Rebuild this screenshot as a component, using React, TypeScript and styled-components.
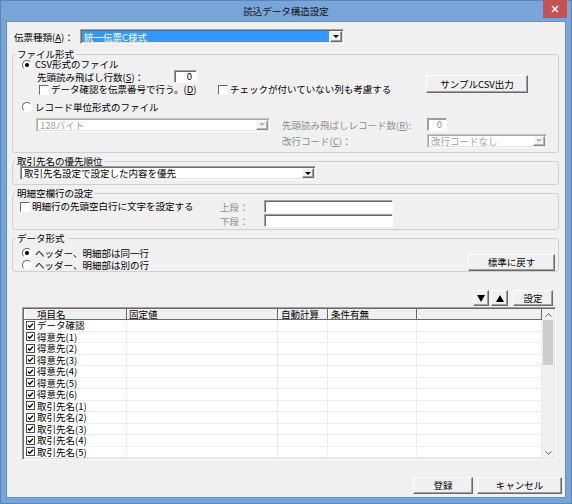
import React from 'react'
import styled, { createGlobalStyle } from 'styled-components'

const GlobalStyle = createGlobalStyle`
  * { box-sizing: border-box; }
  html, body { margin: 0; padding: 0; }
  body {
    font-family: "Noto Sans CJK JP", "Noto Sans", sans-serif;
    font-size: 9.5px;
    color: #000;
    background: #fff;
  }
`

const rows = [
  'データ確認',
  '得意先(1)',
  '得意先(2)',
  '得意先(3)',
  '得意先(4)',
  '得意先(5)',
  '得意先(6)',
  '取引先名(1)',
  '取引先名(2)',
  '取引先名(3)',
  '取引先名(4)',
  '取引先名(5)',
]

const columns = [
  { label: '項目名', indent: 13 },
  { label: '固定値', indent: 2 },
  { label: '自動計算', indent: 3 },
  { label: '条件有無', indent: 3 },
  { label: '', indent: 0 },
]

const App = () => {
  return (
    <>
      <GlobalStyle />
      <Window>
        <TitleBar>
          <Title>読込データ構造設定</Title>
          <CloseButton>
            <svg width="8" height="8" viewBox="0 0 8 8">
              <path d="M1 1 L7 7 M7 1 L1 7" stroke="#fff" strokeWidth="1.6" />
            </svg>
          </CloseButton>
        </TitleBar>

        <Client>
          <TopRow>
            <FieldLabel $w={66}>伝票種類(<u>A</u>)：</FieldLabel>
            <Combo $w={264} $h={15}>
              <ComboText $selected>統一伝票C様式</ComboText>
              <DropButton><Arrow /></DropButton>
            </Combo>
          </TopRow>

          <Group $mt={5} $pb={4}>
            <Legend>ファイル形式</Legend>
            <OptionRow $indent={9} $h={11}>
              <Radio $checked />
              <span>CSV形式のファイル</span>
            </OptionRow>
            <CsvBlock>
              <CsvOptions>
                <OptionRow $indent={24} $h={13}>
                  <FieldLabel $w={137}>先頭読み飛ばし行数(<u>S</u>)：</FieldLabel>
                  <TextBox $w={23} $h={13}>0</TextBox>
                </OptionRow>
                <OptionRow $indent={26} $h={13}>
                  <CheckItem $w={179}>
                    <CheckBox />
                    <span>データ確認を伝票番号で行う。(<u>D</u>)</span>
                  </CheckItem>
                  <CheckItem>
                    <CheckBox />
                    <span>チェックが付いていない列も考慮する</span>
                  </CheckItem>
                </OptionRow>
              </CsvOptions>
              <PushButton $w={102} $h={18} $mt={5}>サンプルCSV出力</PushButton>
            </CsvBlock>
            <OptionRow $indent={9} $h={12} $mt={5}>
              <Radio />
              <span>レコード単位形式のファイル</span>
            </OptionRow>
            <RecordGrid>
              <Combo $w={234} $h={14} $disabled>
                <ComboText $disabled>128バイト</ComboText>
                <DropButton $disabled><Arrow $disabled /></DropButton>
              </Combo>
              <FieldLabel $disabled>先頭読み飛ばしレコード数(<u>R</u>):</FieldLabel>
              <TextBox $w={20} $h={13} $disabled>0</TextBox>
              <span />
              <FieldLabel $disabled>改行コード(<u>C</u>)：</FieldLabel>
              <Combo $w={120} $h={14} $disabled>
                <ComboText $disabled>改行コードなし</ComboText>
                <DropButton $disabled><Arrow $disabled /></DropButton>
              </Combo>
            </RecordGrid>
          </Group>

          <Group $mt={3} $pb={4}>
            <Legend>取引先名の優先順位</Legend>
            <OptionRow $indent={7} $h={14}>
              <Combo $w={296} $h={14}>
                <ComboText>取引先名設定で設定した内容を優先</ComboText>
                <DropButton><Arrow /></DropButton>
              </Combo>
            </OptionRow>
          </Group>

          <Group $mt={3} $pb={2} $pt={2}>
            <Legend>明細空欄行の設定</Legend>
            <BlankRow>
              <CheckItem $w={200}>
                <CheckBox />
                <span>明細行の先頭空白行に文字を設定する</span>
              </CheckItem>
              <BlankGrid>
                <FieldLabel $disabled>上段：</FieldLabel>
                <TextBox $w={129} $h={13} />
                <FieldLabel $disabled>下段：</FieldLabel>
                <TextBox $w={129} $h={13} />
              </BlankGrid>
            </BlankRow>
          </Group>

          <Group $mt={3} $pb={0}>
            <Legend>データ形式</Legend>
            <FormatRow>
              <FormatOptions>
                <OptionRow $indent={9} $h={12}>
                  <Radio $checked />
                  <span>ヘッダー、明細部は同一行</span>
                </OptionRow>
                <OptionRow $indent={9} $h={12}>
                  <Radio />
                  <span>ヘッダー、明細部は別の行</span>
                </OptionRow>
              </FormatOptions>
              <PushButton $w={87} $h={17} $mr={3}>標準に戻す</PushButton>
            </FormatRow>
          </Group>

          <ToolRow>
            <PushButton $w={16} $h={16}>
              <svg width="8" height="7" viewBox="0 0 8 7"><path d="M0 0 H8 L4 7 Z" fill="#000" /></svg>
            </PushButton>
            <PushButton $w={17} $h={16} $ml={2}>
              <svg width="8" height="7" viewBox="0 0 8 7"><path d="M0 7 H8 L4 0 Z" fill="#000" /></svg>
            </PushButton>
            <PushButton $w={40} $h={16} $ml={5}>設定</PushButton>
          </ToolRow>

          <Table>
            <GridArea>
              <HeaderRow>
                {columns.map((c, i) => (
                  <HeaderCell key={i} $indent={c.indent}>{c.label}</HeaderCell>
                ))}
              </HeaderRow>
              {rows.map((r) => (
                <BodyRow key={r}>
                  <BodyCell>
                    <svg width="9" height="9" viewBox="0 0 9 9">
                      <rect x="0.5" y="0.5" width="8" height="8" fill="#fff" stroke="#4a4a4a" />
                      <path d="M2 4.4 L3.8 6.2 L7 2.6" stroke="#000" strokeWidth="1.4" fill="none" />
                    </svg>
                    <span>{r}</span>
                  </BodyCell>
                  <BodyCell />
                  <BodyCell />
                  <BodyCell />
                  <BodyCell />
                </BodyRow>
              ))}
            </GridArea>
            <ScrollBar>
              <ScrollArrow>
                <svg width="7" height="4" viewBox="0 0 7 4"><path d="M0.5 3.5 L3.5 0.8 L6.5 3.5" stroke="#606060" fill="none" /></svg>
              </ScrollArrow>
              <Thumb />
              <ScrollTrack />
              <ScrollArrow>
                <svg width="7" height="4" viewBox="0 0 7 4"><path d="M0.5 0.5 L3.5 3.2 L6.5 0.5" stroke="#606060" fill="none" /></svg>
              </ScrollArrow>
            </ScrollBar>
          </Table>

          <Footer>
            <PushButton $w={60} $h={17}>登録</PushButton>
            <PushButton $w={85} $h={17}>キャンセル</PushButton>
          </Footer>
        </Client>
      </Window>
    </>
  )
}

const Window = styled.div`
  width: 572px;
  height: 504px;
  background: #78a5d8;
  box-shadow: inset 0 0 0 1px #5a86bb;
  display: flex;
  flex-direction: column;
`

const TitleBar = styled.div`
  height: 22px;
  flex: none;
  display: grid;
  grid-template-columns: 1fr auto 1fr;
  align-items: start;
`

const Title = styled.div`
  grid-column: 2;
  line-height: 22px;
  font-size: 9.5px;
  color: #111;
`

const CloseButton = styled.div`
  grid-column: 3;
  justify-self: end;
  width: 24px;
  height: 18px;
  margin-right: 5px;
  background: #c75050;
  display: flex;
  align-items: center;
  justify-content: center;
`

const Client = styled.div`
  flex: 1;
  margin: 0 7px 7px;
  background: #f0f0f0;
  box-shadow: 0 0 0 1px #6690c2;
  display: flex;
  flex-direction: column;
`

const TopRow = styled.div`
  display: flex;
  align-items: center;
  height: 15px;
  margin: 7px 0 0 7px;
`

const FieldLabel = styled.span<{ $w?: number; $disabled?: boolean }>`
  width: ${(p) => (p.$w ? `${p.$w}px` : 'auto')};
  flex: none;
  color: ${(p) => (p.$disabled ? '#8e8e8e' : '#000')};
  white-space: nowrap;
  line-height: 12px;
  align-self: center;
`

const Combo = styled.div<{ $w: number; $h: number; $disabled?: boolean }>`
  width: ${(p) => p.$w}px;
  height: ${(p) => p.$h}px;
  flex: none;
  display: flex;
  background: #fff;
  border: 1px solid;
  border-color: ${(p) => (p.$disabled ? '#c4c4c4 #fff #fff #c4c4c4' : '#a0a0a0 #fff #fff #a0a0a0')};
  box-shadow: inset 1px 1px 0 ${(p) => (p.$disabled ? '#a8a8a8' : '#696969')}, inset -1px -1px 0 #e3e3e3;
  padding: 1px;
`

const ComboText = styled.div<{ $selected?: boolean; $disabled?: boolean }>`
  flex: 1;
  padding-left: 2px;
  margin-right: 1px;
  line-height: 10px;
  display: flex;
  align-items: center;
  white-space: nowrap;
  background: ${(p) => (p.$selected ? '#3399ff' : 'transparent')};
  color: ${(p) => (p.$selected ? '#fff' : p.$disabled ? '#a0a0a0' : '#000')};
`

const DropButton = styled.div<{ $disabled?: boolean }>`
  width: 12px;
  flex: none;
  display: flex;
  align-items: center;
  justify-content: center;
  background: #f0f0f0;
  border: 1px solid;
  border-color: #fff #696969 #696969 #fff;
  box-shadow: inset -1px -1px 0 #a0a0a0;
  opacity: ${(p) => (p.$disabled ? 0.75 : 1)};
`

const Arrow = styled.span<{ $disabled?: boolean }>`
  width: 0;
  height: 0;
  border-left: 3px solid transparent;
  border-right: 3px solid transparent;
  border-top: 3px solid ${(p) => (p.$disabled ? '#a0a0a0' : '#000')};
`

const Group = styled.fieldset<{ $mt: number; $pb: number; $pt?: number }>`
  margin: ${(p) => p.$mt}px 6px 0 5px;
  padding: ${(p) => p.$pt ?? 0}px 0 ${(p) => p.$pb}px 0;
  border: 1px solid #d0d0d0;
  border-radius: 3px;
  min-width: 0;
`

const Legend = styled.legend`
  margin-left: 2px;
  padding: 0 2px;
  line-height: 10px;
  font-size: 9.5px;
`

const OptionRow = styled.div<{ $indent: number; $h: number; $mt?: number }>`
  display: flex;
  align-items: center;
  height: ${(p) => p.$h}px;
  margin-top: ${(p) => p.$mt ?? 0}px;
  padding-left: ${(p) => p.$indent}px;
  white-space: nowrap;
  line-height: 11px;
`

const Radio = styled.span<{ $checked?: boolean }>`
  width: 10px;
  height: 10px;
  flex: none;
  margin-right: 3px;
  border-radius: 50%;
  background: #fff;
  border: 1px solid;
  border-color: #6a6a6a #fff #fff #6a6a6a;
  display: flex;
  align-items: center;
  justify-content: center;
  &::after {
    content: '';
    width: 4px;
    height: 4px;
    border-radius: 50%;
    background: ${(p) => (p.$checked ? '#000' : 'transparent')};
  }
`

const CheckItem = styled.div<{ $w?: number }>`
  display: flex;
  align-items: center;
  width: ${(p) => (p.$w ? `${p.$w}px` : 'auto')};
  flex: none;
  white-space: nowrap;
  height: 13px;
  line-height: 11px;
`

const CheckBox = styled.span`
  width: 10px;
  height: 10px;
  flex: none;
  margin-right: 2px;
  background: #fff;
  border: 1px solid;
  border-color: #6a6a6a #fff #fff #6a6a6a;
`

const TextBox = styled.div<{ $w: number; $h: number; $disabled?: boolean }>`
  width: ${(p) => p.$w}px;
  height: ${(p) => p.$h}px;
  flex: none;
  background: #fff;
  border: 1px solid;
  border-color: #a0a0a0 #fff #fff #a0a0a0;
  box-shadow: inset 1px 1px 0 ${(p) => (p.$disabled ? '#9a9a9a' : '#696969')};
  text-align: right;
  padding-right: 4px;
  line-height: 11px;
  color: ${(p) => (p.$disabled ? '#8e8e8e' : '#000')};
`

const PushButton = styled.div<{ $w: number; $h: number; $mt?: number; $ml?: number; $mr?: number }>`
  width: ${(p) => p.$w}px;
  height: ${(p) => p.$h}px;
  margin: ${(p) => p.$mt ?? 0}px ${(p) => p.$mr ?? 0}px 0 ${(p) => p.$ml ?? 0}px;
  flex: none;
  display: flex;
  align-items: center;
  justify-content: center;
  white-space: nowrap;
  line-height: 11px;
  background: #f0f0f0;
  border: 1px solid;
  border-color: #fff #696969 #696969 #fff;
  box-shadow: inset -1px -1px 0 #a0a0a0;
`

const CsvBlock = styled.div`
  display: flex;
  align-items: flex-start;
`

const CsvOptions = styled.div`
  width: 413px;
  flex: none;
`

const RecordGrid = styled.div`
  display: grid;
  grid-template-columns: 246px 145px auto;
  grid-auto-rows: 15px;
  row-gap: 1px;
  align-items: center;
  margin-top: 4px;
  padding-left: 23px;
`

const BlankRow = styled.div`
  display: flex;
  align-items: flex-start;
  padding-left: 7px;
`

const BlankGrid = styled.div`
  display: grid;
  grid-template-columns: 44px 129px;
  grid-auto-rows: 13px;
  row-gap: 1px;
`

const FormatRow = styled.div`
  display: flex;
  justify-content: space-between;
  align-items: flex-end;
`

const FormatOptions = styled.div`
  padding-top: 4px;
`

const ToolRow = styled.div`
  display: flex;
  justify-content: flex-end;
  margin: 18px 12px 0 0;
`

const Table = styled.div`
  margin: 1px 9px 0 15px;
  height: 153px;
  flex: none;
  display: flex;
  background: #fff;
  border: 1px solid;
  border-color: #a0a0a0 #fff #fff #a0a0a0;
  box-shadow: inset 1px 1px 0 #696969, inset -1px -1px 0 #e3e3e3;
  padding: 1px;
`

const GridArea = styled.div`
  flex: 1;
  display: flex;
  flex-direction: column;
`

const HeaderRow = styled.div`
  display: grid;
  grid-template-columns: 103px 151px 50px 89px 1fr;
  height: 11px;
  background: #f0f0f0;
  flex: none;
`

const HeaderCell = styled.div<{ $indent: number }>`
  padding-left: ${(p) => p.$indent}px;
  line-height: 10px;
  white-space: nowrap;
  border-right: 1px solid #696969;
  border-bottom: 1px solid #696969;
  box-shadow: inset 1px 0 0 #fff;
`

const BodyRow = styled.div`
  display: grid;
  grid-template-columns: 103px 151px 50px 89px 1fr;
  height: 11.5px;
  flex: none;
`

const BodyCell = styled.div`
  display: flex;
  align-items: center;
  gap: 2px;
  padding-left: 2px;
  border-right: 1px solid #ececec;
  border-bottom: 1px solid #ececec;
  white-space: nowrap;
  line-height: 10px;
`

const ScrollBar = styled.div`
  width: 12px;
  flex: none;
  display: flex;
  flex-direction: column;
  background: #f0f0f0;
`

const ScrollArrow = styled.div`
  height: 11px;
  flex: none;
  display: flex;
  align-items: center;
  justify-content: center;
`

const Thumb = styled.div`
  height: 45px;
  flex: none;
  margin: 0 1px;
  background: #cdcdcd;
`

const ScrollTrack = styled.div`
  flex: 1;
`

const Footer = styled.div`
  display: flex;
  justify-content: flex-end;
  gap: 4px;
  margin: 17px 3px 0 0;
`

export default App
